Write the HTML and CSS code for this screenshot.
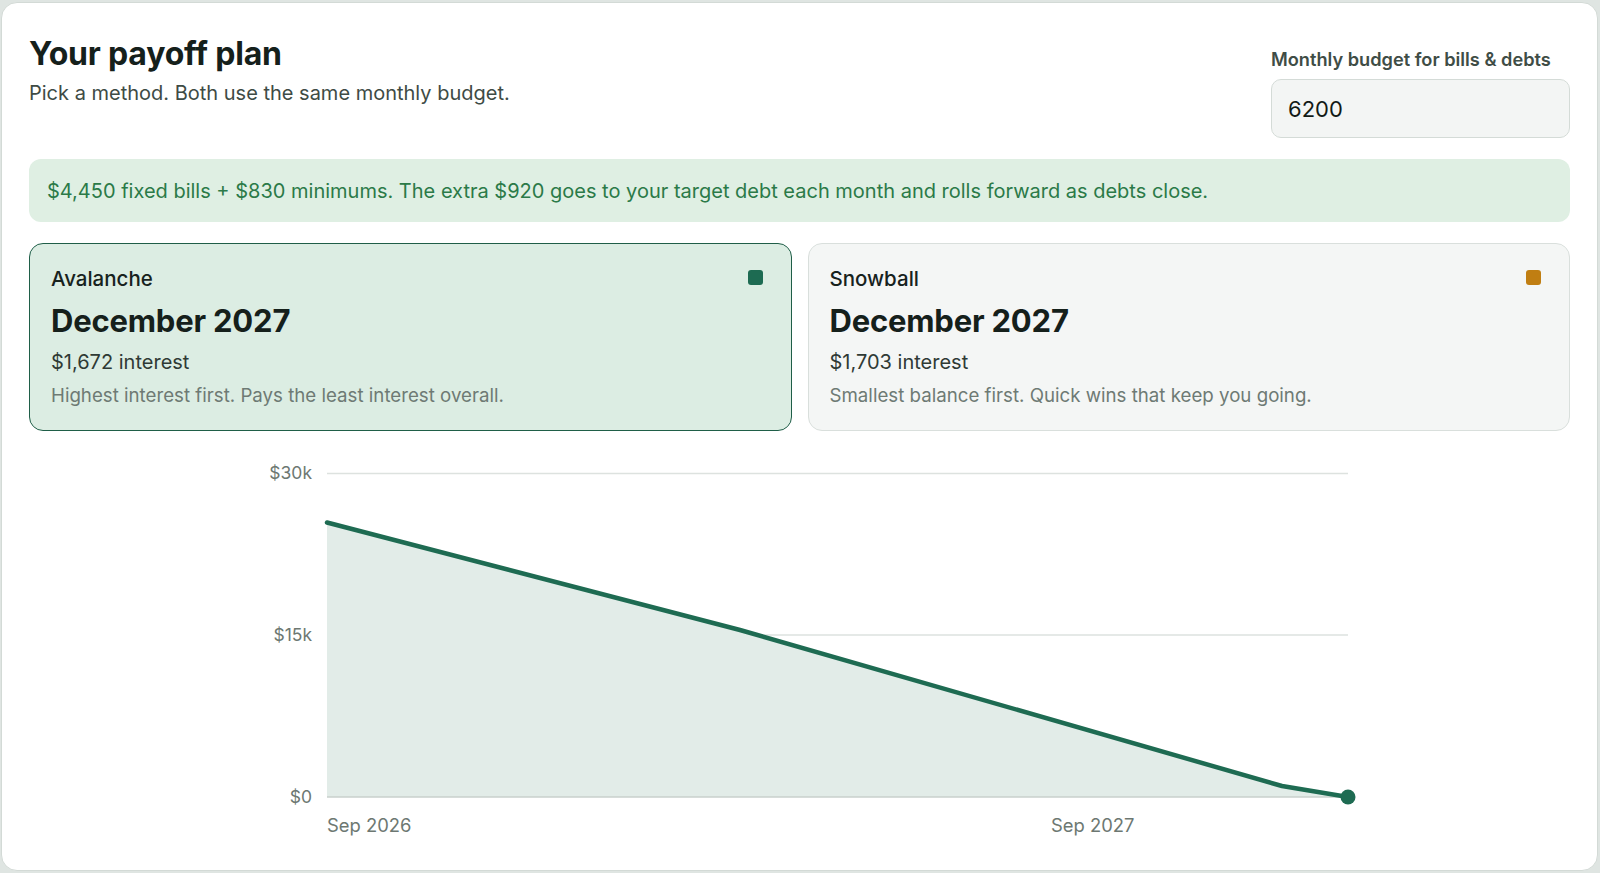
FILE: index.html
```html
<!DOCTYPE html>
<html lang="en">
<head>
<meta charset="utf-8">
<title>Your payoff plan</title>
<link rel="stylesheet" href="styles.css">
</head>
<body>
<main class="panel">
  <header class="head">
    <div class="intro">
      <h1 class="title">Your payoff plan</h1>
      <p class="subtitle">Pick a method. Both use the same monthly budget.</p>
    </div>
    <div class="budget">
      <label class="budget-label" for="budget">Monthly budget for bills &amp; debts</label>
      <input class="budget-input" id="budget" type="text" value="6200">
    </div>
  </header>

  <div class="banner">$4,450 fixed bills + $830 minimums. The extra $920 goes to your target debt each month and rolls forward as debts close.</div>

  <section class="methods">
    <div class="method method-active">
      <div class="method-top">
        <span class="method-name">Avalanche</span>
        <span class="swatch swatch-green"></span>
      </div>
      <div class="method-date">December 2027</div>
      <div class="method-interest">$1,672 interest</div>
      <div class="method-desc">Highest interest first. Pays the least interest overall.</div>
    </div>
    <div class="method">
      <div class="method-top">
        <span class="method-name">Snowball</span>
        <span class="swatch swatch-amber"></span>
      </div>
      <div class="method-date">December 2027</div>
      <div class="method-interest">$1,703 interest</div>
      <div class="method-desc">Smallest balance first. Quick wins that keep you going.</div>
    </div>
  </section>

  <svg class="chart" viewBox="29 450 1542 400" width="1542" height="400" xmlns="http://www.w3.org/2000/svg">
    <line class="grid" x1="327" y1="473.5" x2="1348" y2="473.5"/>
    <line class="grid" x1="327" y1="635" x2="1348" y2="635"/>
    <path class="area" d="M327,522.5 L740,630 L1282,786 L1348,797 L327,797 Z"/>
    <line class="base" x1="327" y1="797" x2="1348" y2="797"/>
    <path class="line" d="M327,522.5 L740,630 L1282,786 L1348,797"/>
    <circle class="dot" cx="1348" cy="797" r="7.5"/>
    <text class="ylab" x="312" y="479">$30k</text>
    <text class="ylab" x="312" y="641">$15k</text>
    <text class="ylab" x="312" y="803">$0</text>
    <text class="xlab" x="327" y="832">Sep 2026</text>
    <text class="xlab" x="1051" y="832">Sep 2027</text>
  </svg>
</main>
</body>
</html>
```

FILE: styles.css
```css
* { box-sizing: border-box; }

html, body {
  margin: 0;
  padding: 0;
  background: #dfe5e2;
}

body {
  font-family: "Inter", "Noto Sans", sans-serif;
  color: #15201b;
  padding: 2px 2px 2px 1px;
}

.panel {
  width: 1597px;
  height: 869px;
  background: #ffffff;
  border: 1px solid #d3dad6;
  border-radius: 16px;
  padding: 27px 27px 0 27px;
  overflow: hidden;
}

.head {
  display: flex;
  justify-content: space-between;
  align-items: flex-start;
}

.intro {
  padding-top: 5px;
}

.title {
  margin: 0;
  font-size: 32px;
  line-height: 38px;
  font-weight: 700;
  letter-spacing: -0.2px;
  color: #15201b;
}

.subtitle {
  margin: 8px 0 0 0;
  font-size: 20px;
  line-height: 24px;
  color: #3e4b45;
}

.budget {
  display: flex;
  flex-direction: column;
  width: 299px;
  padding-top: 18px;
}

.budget-label {
  font-size: 18.2px;
  line-height: 22px;
  font-weight: 600;
  color: #3f4d46;
}

.budget-input {
  margin-top: 9px;
  height: 59px;
  width: 299px;
  border: 1px solid #d4dbd7;
  border-radius: 10px;
  background: #f3f5f4;
  padding: 0 16px;
  font-family: inherit;
  font-size: 22px;
  color: #121a16;
  outline: none;
}

.banner {
  margin-top: 21px;
  height: 63px;
  display: flex;
  align-items: center;
  padding: 0 18px;
  background: #dfefe3;
  border-radius: 12px;
  font-size: 20px;
  color: #2b7a48;
}

.methods {
  margin-top: 21px;
  display: grid;
  grid-template-columns: 1fr 1fr;
  gap: 16px;
}

.method {
  height: 188px;
  border: 1.5px solid #d9dfdc;
  background: #f4f6f5;
  border-radius: 14px;
  padding: 23px 28px 0 21px;
}

.method-active {
  background: #dcede3;
  border-color: #1f5e48;
}

.method-top {
  display: flex;
  justify-content: space-between;
  align-items: center;
  height: 24px;
}

.method-name {
  font-size: 20.5px;
  line-height: 24px;
  font-weight: 500;
  color: #17221d;
}

.swatch {
  width: 15px;
  height: 15px;
  border-radius: 3px;
  margin-top: -4px;
}

.swatch-green { background: #1d6b52; }
.swatch-amber { background: #c07e12; }

.method-date {
  margin-top: 12px;
  font-size: 31px;
  line-height: 36px;
  font-weight: 700;
  letter-spacing: -0.2px;
  color: #15201b;
}

.method-interest {
  margin-top: 11px;
  font-size: 20px;
  line-height: 24px;
  color: #2f3a35;
}

.method-desc {
  margin-top: 11px;
  font-size: 18.7px;
  line-height: 22px;
  color: #6e7a74;
}

.chart {
  display: block;
  margin-top: 19px;
}

.grid {
  stroke: #dde2df;
  stroke-width: 1.5;
}

.base {
  stroke: #c9d1cd;
  stroke-width: 1.5;
}

.area {
  fill: #e2ece8;
}

.line {
  fill: none;
  stroke: #1e6b52;
  stroke-width: 4.5;
  stroke-linejoin: round;
  stroke-linecap: round;
}

.dot {
  fill: #1e6b52;
}

.ylab {
  font-family: "Inter", "Noto Sans", sans-serif;
  font-size: 17.5px;
  fill: #6d7872;
  text-anchor: end;
}

.xlab {
  font-family: "Inter", "Noto Sans", sans-serif;
  font-size: 18.4px;
  fill: #6d7872;
}
```
